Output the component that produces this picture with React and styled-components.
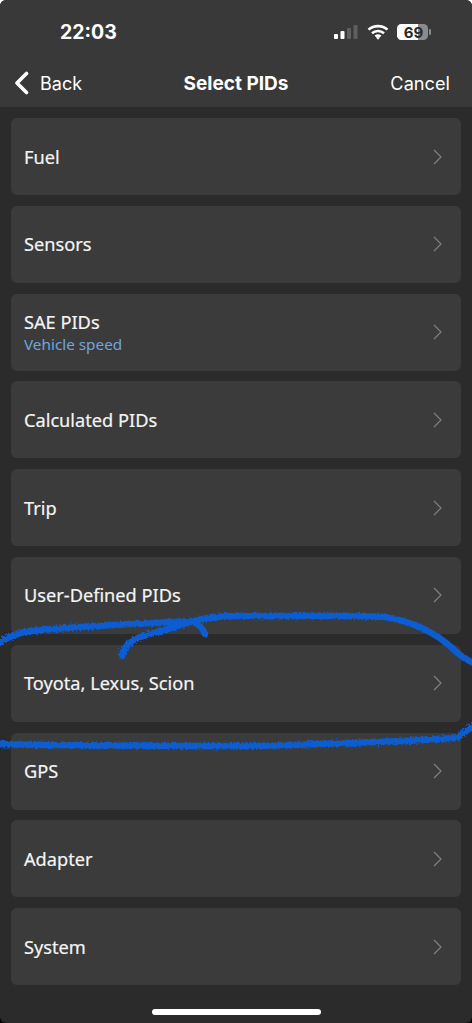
import React from "react";
import styled, { createGlobalStyle } from "styled-components";

const GlobalStyle = createGlobalStyle`
  html {
    background: linear-gradient(#fff 50%, #000 50%);
  }
  body {
    margin: 0;
    padding: 0;
  }
`;

const Screen = styled.div`
  position: relative;
  width: 472px;
  height: 1023px;
  overflow: hidden;
  background: #2b2b2b;
  border-radius: 6px;
  font-family: "Noto Sans", sans-serif;
`;

const Header = styled.header`
  height: 107px;
  background: #393939;
  color: #fff;
  font-family: Inter, "Liberation Sans", sans-serif;
`;

const StatusBar = styled.div`
  height: 64px;
  display: flex;
  align-items: center;
  justify-content: space-between;
  padding: 0 41px 0 60px;
`;

const Time = styled.span`
  font-size: 19.5px;
  font-weight: 700;
`;

const StatusIcons = styled.div`
  display: flex;
  align-items: center;
  gap: 8px;
`;

const Nav = styled.nav`
  height: 38px;
  display: grid;
  grid-template-columns: 1fr auto 1fr;
  align-items: center;
  padding: 0 14px;
`;

const BackButton = styled.span`
  display: flex;
  align-items: center;
  gap: 11px;
  font-size: 18px;
`;

const Title = styled.span`
  font-size: 19px;
  font-weight: 700;
`;

const CancelButton = styled.span`
  justify-self: end;
  margin-right: 8px;
  font-size: 18.2px;
`;

const List = styled.main`
  display: flex;
  flex-direction: column;
  gap: 10.8px;
  padding: 11px 11px 0;
`;

const Card = styled.div`
  height: 77px;
  display: flex;
  align-items: center;
  justify-content: space-between;
  padding: 0 19px 0 13px;
  background: #3b3b3b;
  border-radius: 6px;
`;

const Labels = styled.div`
  display: flex;
  flex-direction: column;
  padding-top: 1px;
`;

const Label = styled.span`
  color: #f4f4f4;
  font-size: 18.2px;
  font-weight: 400;
  line-height: 23px;
  -webkit-text-stroke: 0.2px #f4f4f4;
`;

const SubLabel = styled.span`
  color: #6ea6de;
  font-size: 15.3px;
  line-height: 21px;
`;

const HomeBar = styled.div`
  position: absolute;
  left: 152px;
  bottom: 8px;
  width: 169px;
  height: 6px;
  border-radius: 3px;
  background: #fff;
`;

const Scribble = styled.svg`
  position: absolute;
  inset: 0;
  pointer-events: none;
`;

const items = [
  { label: "Fuel" },
  { label: "Sensors" },
  { label: "SAE PIDs", sub: "Vehicle speed" },
  { label: "Calculated PIDs" },
  { label: "Trip" },
  { label: "User-Defined PIDs" },
  { label: "Toyota, Lexus, Scion" },
  { label: "GPS" },
  { label: "Adapter" },
  { label: "System" },
];

const Chevron = () => (
  <svg width="9" height="16" viewBox="0 0 9 16" fill="none">
    <path d="M1 1l7 7-7 7" stroke="#7f7f7f" strokeWidth="1.2" />
  </svg>
);

const SignalIcon = () => (
  <svg width="25" height="16" viewBox="0 0 25 16">
    <rect x="0" y="10" width="4" height="5" rx="1" fill="#fff" />
    <rect x="6.5" y="7" width="4" height="8" rx="1" fill="#fff" />
    <rect x="13" y="4" width="4" height="11" rx="1" fill="#5f5f5f" />
    <rect x="19.5" y="1" width="4" height="14" rx="1" fill="#5f5f5f" />
  </svg>
);

const WifiIcon = () => (
  <svg width="22" height="16" viewBox="0 0 22 16" fill="none" stroke="#fff" strokeWidth="2.6">
    <path d="M1.5 5.6C6.8.9 15.2.9 20.5 5.6" />
    <path d="M5 9.3c3.4-3 8.6-3 12 0" />
    <path d="M8.4 12.6c1.5-1.2 3.7-1.2 5.2 0" />
    <path d="M11 15.8l-2-2.2c1.2-.8 2.8-.8 4 0z" fill="#fff" stroke="none" />
  </svg>
);

const BatteryIcon = () => (
  <svg width="34" height="16" viewBox="0 0 34 16">
    <rect x="0" y="0" width="31" height="16" rx="4.5" fill="#8b8b8b" />
    <path d="M4.5 0H21v16H4.5A4.5 4.5 0 0 1 0 11.5v-7A4.5 4.5 0 0 1 4.5 0z" fill="#fff" />
    <rect x="32" y="5" width="2" height="6" rx="1" fill="#8b8b8b" />
    <text
      x="16.500"
      y="13.500"
      textAnchor="middle"
      fontFamily="Inter, sans-serif"
      fontSize="15"
      fontWeight="700"
      fill="#2a2a2a"
    >
      69
    </text>
  </svg>
);

const BackIcon = () => (
  <svg width="15" height="24" viewBox="0 0 15 24" fill="none">
    <path d="M12.5 2.5L3 12l9.5 9.5" stroke="#fff" strokeWidth="3.6" strokeLinecap="round" strokeLinejoin="round" />
  </svg>
);

const App = () => {
  return (
    <Screen>
      <GlobalStyle />
      <Header>
        <StatusBar>
          <Time>22:03</Time>
          <StatusIcons>
            <SignalIcon />
            <WifiIcon />
            <BatteryIcon />
          </StatusIcons>
        </StatusBar>
        <Nav>
          <BackButton>
            <BackIcon />
            Back
          </BackButton>
          <Title>Select PIDs</Title>
          <CancelButton>Cancel</CancelButton>
        </Nav>
      </Header>
      <List>
        {items.map((item) => (
          <Card key={item.label}>
            <Labels>
              <Label>{item.label}</Label>
              {item.sub && <SubLabel>{item.sub}</SubLabel>}
            </Labels>
            <Chevron />
          </Card>
        ))}
      </List>
      <HomeBar />
      <Scribble width="472" height="1023" viewBox="0 0 472 1023" fill="none">
        <defs>
          <filter id="rough" x="-5%" y="-20%" width="110%" height="140%">
            <feTurbulence type="fractalNoise" baseFrequency="0.5" numOctaves="2" seed="4" />
            <feDisplacementMap in="SourceGraphic" scale="5" />
          </filter>
        </defs>
        <g stroke="#0a5bd0" strokeWidth="6.5" strokeLinecap="round" strokeLinejoin="round" filter="url(#rough)">
          <path d="M-4 645C4 639 12 635 24 632C60 627 120 625 190 621C197 623 203 628 205 634" />
          <path d="M122 656C123 648 128 642 140 637C155 632 175 627 192 622C205 617 225 615 260 616C300 616 350 615 385 617C415 622 437 634 452 648C458 654 465 660 476 664" />
          <path d="M-4 744C60 746 130 745 200 746C270 747 340 743 400 741C430 740 445 739 458 737C464 733 470 728 476 724" />
        </g>
      </Scribble>
    </Screen>
  );
};

export default App;
